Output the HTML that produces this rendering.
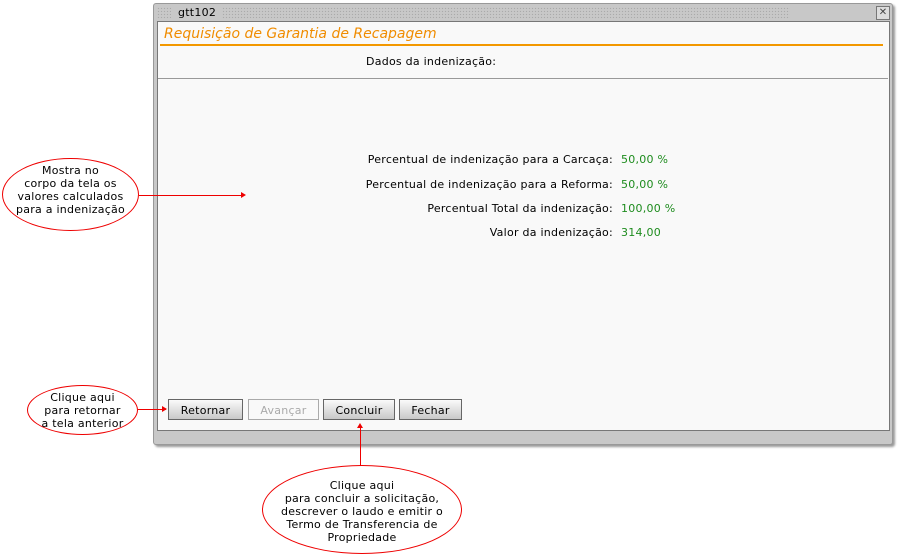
<!DOCTYPE html>
<html><head><meta charset="utf-8"><style>
body{margin:0;width:898px;height:560px;background:#fff;position:relative;overflow:hidden;font-family:"DejaVu Sans","Liberation Sans",sans-serif;font-size:11px;color:#000;letter-spacing:0.25px}
.a{position:absolute}
.win{left:153px;top:3px;width:738px;height:440px;background:#c8c8c8;border:1px solid #999;border-radius:3px;box-shadow:2px 2px 2px #999}
.content{left:157px;top:21px;width:731px;height:408px;background:#f9f9f9;border:1px solid #777}
.dots{background-image:radial-gradient(#aaa 0.7px,transparent 0.8px);background-size:3px 3px}
.lbl{right:285px;text-align:right;white-space:nowrap}
.val{left:621px;color:#1e8c1e;white-space:nowrap}
.btn{top:399px;height:21px;border:1px solid #666;background:linear-gradient(#fafafa,#c8c8c8);text-align:center;line-height:21px;font-size:11px;box-sizing:border-box}
.ell{border:1.5px solid #e00;border-radius:50%;text-align:center;font-size:11px;line-height:13px;box-sizing:border-box;white-space:nowrap}
.rl{background:#e00}
</style></head><body>
<div class="a win"></div>
<div class="a dots" style="left:157px;top:7px;width:14px;height:12px"></div>
<div class="a" style="left:178px;top:6px">gtt102</div>
<div class="a dots" style="left:222px;top:7px;width:568px;height:12px"></div>
<div class="a" style="left:876px;top:6px;width:12px;height:12px;border:1px solid #777;background:#ddd;font-size:10px;line-height:12px;text-align:center;color:#444;letter-spacing:0">✕</div>
<div class="a content"></div>
<div class="a" style="left:164px;top:26px;font-size:14px;font-style:italic;color:#f08c00;letter-spacing:0">Requisição de Garantia de Recapagem</div>
<div class="a" style="left:160px;top:44px;width:723px;height:2px;background:#f39800"></div>
<div class="a" style="left:366px;top:55px">Dados da indenização:</div>
<div class="a" style="left:158px;top:78px;width:730px;height:1px;background:#999"></div>
<div class="a lbl" style="top:153px">Percentual de indenização para a Carcaça:</div>
<div class="a val" style="top:153px">50,00 %</div>
<div class="a lbl" style="top:178px">Percentual de indenização para a Reforma:</div>
<div class="a val" style="top:178px">50,00 %</div>
<div class="a lbl" style="top:202px">Percentual Total da indenização:</div>
<div class="a val" style="top:202px">100,00 %</div>
<div class="a lbl" style="top:226px">Valor da indenização:</div>
<div class="a val" style="top:226px">314,00</div>
<div class="a btn" style="left:168px;width:75px">Retornar</div>
<div class="a btn" style="left:248px;width:71px;background:#f9f9f9;border-color:#aaa;color:#aaa">Avançar</div>
<div class="a btn" style="left:323px;width:72px">Concluir</div>
<div class="a btn" style="left:399px;width:63px">Fechar</div>
<div class="a ell" style="left:2px;top:158px;width:137px;height:73px;padding-top:5px">Mostra no<br>corpo da tela os<br>valores calculados<br>para a indenização</div>
<div class="a rl" style="left:139px;top:195px;width:104px;height:1px"></div>
<div class="a" style="left:241px;top:192px;width:0;height:0;border-left:5px solid #e00;border-top:3px solid transparent;border-bottom:3px solid transparent"></div>
<div class="a ell" style="left:27px;top:385px;width:111px;height:50px;padding-top:5px">Clique aqui<br>para retornar<br>a tela anterior</div>
<div class="a rl" style="left:138px;top:409px;width:28px;height:1px"></div>
<div class="a" style="left:162px;top:406px;width:0;height:0;border-left:5px solid #e00;border-top:3px solid transparent;border-bottom:3px solid transparent"></div>
<div class="a rl" style="left:360px;top:426px;width:1px;height:40px"></div>
<div class="a" style="left:357px;top:423px;width:0;height:0;border-bottom:5px solid #e00;border-left:3px solid transparent;border-right:3px solid transparent"></div>
<div class="a ell" style="left:262px;top:465px;width:200px;height:89px;padding-top:13px">Clique aqui<br>para concluir a solicitação,<br>descrever o laudo e emitir o<br>Termo de Transferencia de<br>Propriedade</div>
</body></html>
